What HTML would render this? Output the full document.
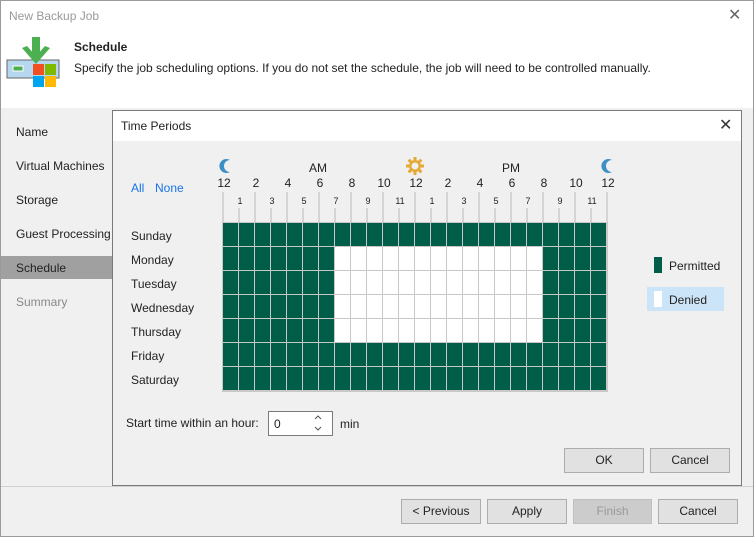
<!DOCTYPE html>
<html><head><meta charset="utf-8"><style>
*{margin:0;padding:0;box-sizing:border-box}
body{width:754px;height:537px;position:relative;overflow:hidden;background:#f0f0f0;font-family:"Liberation Sans",sans-serif;font-size:12px;color:#222}
.a{position:absolute}
.btn{position:absolute;height:25px;border:1px solid #adadad;background:#e1e1e1;text-align:center;line-height:23px;font-size:12px;color:#222}
.nav{position:absolute;left:16px;font-size:12px}
.tl{position:absolute;width:2px;background:#d4d4d4}
.hl{position:absolute;top:176px;width:30px;margin-left:-14px;text-align:center;font-size:12px}
.ol{position:absolute;top:196px;width:20px;margin-left:-9px;text-align:center;font-size:9px}
.day{position:absolute;left:131px;font-size:12px}
</style></head><body>
<div class="a" style="left:0;top:0;width:754px;height:537px;border:1px solid #9a9a9a"></div>
<div class="a" style="left:1px;top:1px;width:752px;height:107px;background:#fff"></div>
<div class="a" style="left:9px;top:9px;color:#999;font-size:12px">New Backup Job</div>
<div class="a" style="left:728px;top:5px;color:#666;font-size:16px">✕</div>
<svg class="a" style="left:6px;top:36px" width="54" height="54">
<rect x="1" y="24" width="52" height="18" fill="#b7d6ef" stroke="#666" stroke-width="1"/>
<rect x="7" y="30" width="10" height="5" fill="#4caf50" stroke="#fff"/>
<rect x="26" y="1" width="8" height="20" fill="#4caf50"/>
<polygon points="16,12 30,28 44,12 39,10 30,20 21,10" fill="#4caf50"/>
<rect x="27" y="28" width="11" height="11" fill="#f25022"/>
<rect x="39" y="28" width="11" height="11" fill="#7fba00"/>
<rect x="27" y="40" width="11" height="11" fill="#00a4ef"/>
<rect x="39" y="40" width="11" height="11" fill="#ffb900"/>
</svg>
<div class="a" style="left:74px;top:40px;font-weight:bold;font-size:12px">Schedule</div>
<div class="a" style="left:74px;top:61px">Specify the job scheduling options. If you do not set the schedule, the job will need to be controlled manually.</div>
<div class="nav" style="top:125px">Name</div>
<div class="nav" style="top:159px">Virtual Machines</div>
<div class="nav" style="top:193px">Storage</div>
<div class="nav" style="top:227px">Guest Processing</div>
<div class="a" style="left:1px;top:256px;width:111px;height:23px;background:#a0a0a0"></div>
<div class="nav" style="top:261px">Schedule</div>
<div class="nav" style="top:295px;color:#888">Summary</div>
<div class="a" style="left:1px;top:486px;width:752px;height:1px;background:#d0d0d0"></div>
<div class="btn" style="left:401px;top:499px;width:80px">&lt; Previous</div>
<div class="btn" style="left:487px;top:499px;width:80px">Apply</div>
<div class="btn" style="left:573px;top:499px;width:79px;background:#ccc;border-color:#bfbfbf;color:#999">Finish</div>
<div class="btn" style="left:658px;top:499px;width:80px">Cancel</div>
<div class="a" style="left:112px;top:110px;width:630px;height:376px;border:1px solid #7a7a7a;background:#f0f0f0"></div>
<div class="a" style="left:113px;top:111px;width:628px;height:30px;background:#fff"></div>
<div class="a" style="left:121px;top:119px">Time Periods</div>
<div class="a" style="left:719px;top:115px;font-size:16px;color:#333">✕</div>
<div class="a" style="left:131px;top:181px;color:#1a73e8">All</div>
<div class="a" style="left:155px;top:181px;color:#1a73e8">None</div>
<div class="a" style="left:309px;top:161px">AM</div>
<div class="a" style="left:502px;top:161px">PM</div>
<svg class="a" style="left:219px;top:158px" width="14" height="16"><path d="M11 2 A7 7 0 1 0 11 14 A6 6 0 0 1 11 2Z" fill="#3d8fc6"/></svg>
<svg class="a" style="left:601px;top:158px" width="14" height="16"><path d="M11 2 A7 7 0 1 0 11 14 A6 6 0 0 1 11 2Z" fill="#3d8fc6"/></svg>
<svg class="a" style="left:406px;top:157px" width="18" height="18"><g fill="#e5a935"><circle cx="9" cy="9" r="6"/><rect x="7.5" y="0" width="3" height="18"/><rect x="0" y="7.5" width="18" height="3"/><rect x="7.5" y="0" width="3" height="18" transform="rotate(45 9 9)"/><rect x="7.5" y="0" width="3" height="18" transform="rotate(-45 9 9)"/></g><circle cx="9" cy="9" r="3.5" fill="#f0f0f0"/></svg>
<div class="tl" style="left:222px;top:192px;height:31px"></div><div class="tl" style="left:254px;top:192px;height:31px"></div><div class="tl" style="left:286px;top:192px;height:31px"></div><div class="tl" style="left:318px;top:192px;height:31px"></div><div class="tl" style="left:350px;top:192px;height:31px"></div><div class="tl" style="left:382px;top:192px;height:31px"></div><div class="tl" style="left:414px;top:192px;height:31px"></div><div class="tl" style="left:446px;top:192px;height:31px"></div><div class="tl" style="left:478px;top:192px;height:31px"></div><div class="tl" style="left:510px;top:192px;height:31px"></div><div class="tl" style="left:542px;top:192px;height:31px"></div><div class="tl" style="left:574px;top:192px;height:31px"></div><div class="tl" style="left:606px;top:192px;height:31px"></div>
<div class="tl" style="left:238px;top:208px;height:15px"></div><div class="tl" style="left:270px;top:208px;height:15px"></div><div class="tl" style="left:302px;top:208px;height:15px"></div><div class="tl" style="left:334px;top:208px;height:15px"></div><div class="tl" style="left:366px;top:208px;height:15px"></div><div class="tl" style="left:398px;top:208px;height:15px"></div><div class="tl" style="left:430px;top:208px;height:15px"></div><div class="tl" style="left:462px;top:208px;height:15px"></div><div class="tl" style="left:494px;top:208px;height:15px"></div><div class="tl" style="left:526px;top:208px;height:15px"></div><div class="tl" style="left:558px;top:208px;height:15px"></div><div class="tl" style="left:590px;top:208px;height:15px"></div>
<div class="hl" style="left:223px">12</div><div class="hl" style="left:255px">2</div><div class="hl" style="left:287px">4</div><div class="hl" style="left:319px">6</div><div class="hl" style="left:351px">8</div><div class="hl" style="left:383px">10</div><div class="hl" style="left:415px">12</div><div class="hl" style="left:447px">2</div><div class="hl" style="left:479px">4</div><div class="hl" style="left:511px">6</div><div class="hl" style="left:543px">8</div><div class="hl" style="left:575px">10</div><div class="hl" style="left:607px">12</div>
<div class="ol" style="left:239px">1</div><div class="ol" style="left:271px">3</div><div class="ol" style="left:303px">5</div><div class="ol" style="left:335px">7</div><div class="ol" style="left:367px">9</div><div class="ol" style="left:399px">11</div><div class="ol" style="left:431px">1</div><div class="ol" style="left:463px">3</div><div class="ol" style="left:495px">5</div><div class="ol" style="left:527px">7</div><div class="ol" style="left:559px">9</div><div class="ol" style="left:591px">11</div>
<div class="a" style="left:222px;top:222px;width:386px;height:170px;background:#005e48">
<div class="a" style="left:113px;top:25px;width:208px;height:96px;background:#fff"></div>
<div class="a" style="left:0;top:0;width:386px;height:170px;background:repeating-linear-gradient(90deg,#c8c8c8 0 1px,transparent 1px 16px),repeating-linear-gradient(180deg,#c8c8c8 0 1px,transparent 1px 24px)"></div>
<div class="a" style="left:385px;top:0;width:1px;height:170px;background:#c8c8c8"></div>
<div class="a" style="left:0;top:169px;width:386px;height:1px;background:#c8c8c8"></div>
</div>
<div class="day" style="top:229px">Sunday</div>
<div class="day" style="top:253px">Monday</div>
<div class="day" style="top:277px">Tuesday</div>
<div class="day" style="top:301px">Wednesday</div>
<div class="day" style="top:325px">Thursday</div>
<div class="day" style="top:349px">Friday</div>
<div class="day" style="top:373px">Saturday</div>
<div class="a" style="left:654px;top:257px;width:8px;height:16px;background:#005e48"></div>
<div class="a" style="left:669px;top:259px">Permitted</div>
<div class="a" style="left:647px;top:287px;width:77px;height:24px;background:#cce4f7"></div>
<div class="a" style="left:654px;top:291px;width:8px;height:16px;background:#fff"></div>
<div class="a" style="left:669px;top:293px">Denied</div>
<div class="a" style="left:126px;top:416px">Start time within an hour:</div>
<div class="a" style="left:268px;top:411px;width:65px;height:25px;border:1px solid #7a7a7a;background:#fff"></div>
<div class="a" style="left:274px;top:417px">0</div>
<svg class="a" style="left:313px;top:413px" width="10" height="20"><path d="M2 6 L5 3 L8 6 M2 14 L5 17 L8 14" fill="none" stroke="#555" stroke-width="1"/></svg>
<div class="a" style="left:340px;top:417px">min</div>
<div class="btn" style="left:564px;top:448px;width:80px">OK</div>
<div class="btn" style="left:650px;top:448px;width:80px">Cancel</div>
</body></html>
